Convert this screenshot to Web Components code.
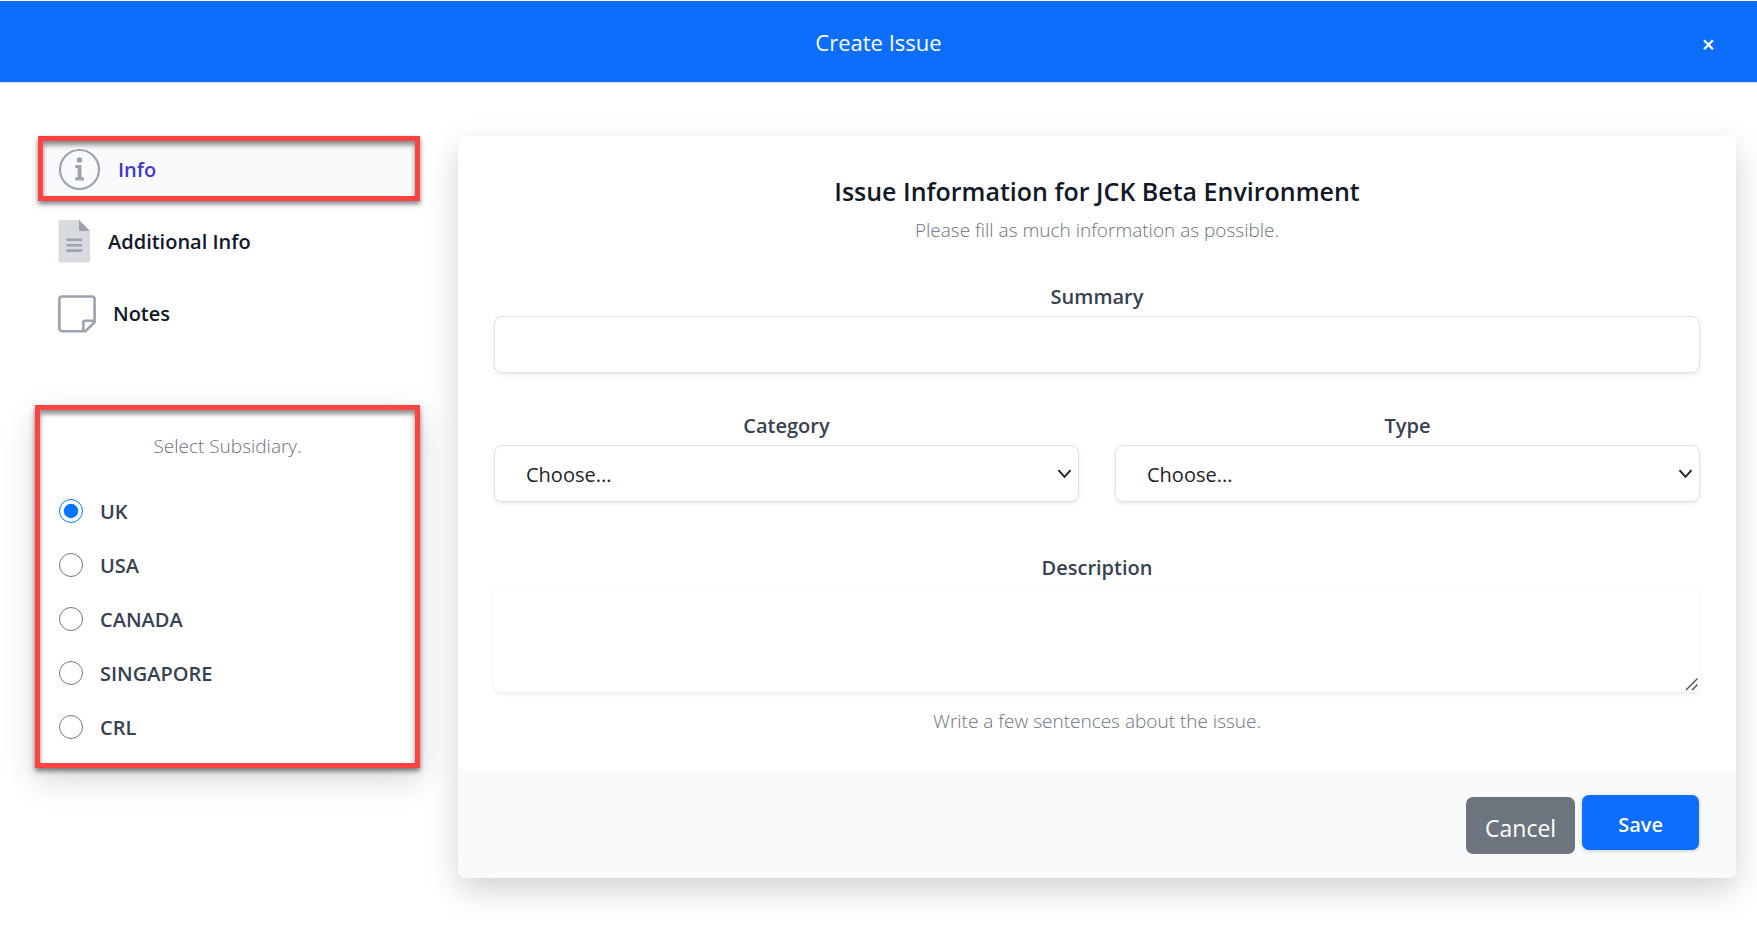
<!DOCTYPE html>
<html lang="en">
<head>
<meta charset="utf-8">
<meta name="viewport" content="width=device-width, initial-scale=1">
<title>Create Issue</title>
<style>
  body {
    margin: 0;
    background: #fff;
    font-family: "Open Sans", "Noto Sans", sans-serif;
    font-size: 20px;
    line-height: 28px;
    --blue: #0d6efd;
    --grey-50: #f9fafb;
    --grey-500: #6b7280;
    --grey-700: #374151;
    --grey-900: #111827;
    --mark: #ff4242;
  }
</style>
</head>
<body>
<issue-page>
  <dialog-header slot="header">Create Issue</dialog-header>

  <side-nav slot="aside">
    <nav-item icon="info" current>Info</nav-item>
    <nav-item icon="file">Additional Info</nav-item>
    <nav-item icon="note">Notes</nav-item>
  </side-nav>
  <subsidiary-picker slot="aside" options="UK,USA,CANADA,SINGAPORE,CRL" selected="UK">Select Subsidiary.</subsidiary-picker>

  <issue-card>
    <span slot="title">Issue Information for JCK Beta Environment</span>
    <span slot="subtitle">Please fill as much information as possible.</span>
    <text-field class="wide" label="Summary"></text-field>
    <select-field label="Category"></select-field>
    <select-field label="Type"></select-field>
    <area-field class="wide last" label="Description" hint="Write a few sentences about the issue."></area-field>
    <action-button slot="actions" kind="cancel">Cancel</action-button>
    <action-button slot="actions" kind="save">Save</action-button>
  </issue-card>
</issue-page>

<script>
  const define = (name, render) => customElements.define(name, class extends HTMLElement {
    connectedCallback() {
      if (this.shadowRoot) return;
      this.attachShadow({ mode: 'open' }).innerHTML = render(this);
    }
  });

  const fieldStyles = `
    :host { display: block; }
    label { display: block; text-align: center; font-weight: 600; line-height: 28px; color: var(--grey-700); margin-bottom: 5px; }
    input, select, textarea {
      display: block; box-sizing: border-box; width: 100%; margin: 0; height: 57px;
      font: inherit; color: #212529; background: #fff;
      border: 1px solid #dee2e6; border-radius: 8px;
      box-shadow: 0 2px 4px rgba(0, 0, 0, .08);
    }
    .control { position: relative; }
    .control svg { position: absolute; pointer-events: none; fill: none; }
  `;

  const icons = {
    info: `<svg width="43" height="43" viewBox="0 0 43 43" aria-hidden="true">
      <circle cx="21.5" cy="21.5" r="19.5" fill="none" stroke="#9ca3af" stroke-width="2.2"/>
      <circle cx="21.5" cy="12" r="2.8" fill="#9ca3af"/>
      <path d="M17.3 17h6.200v12.200h2.400v3.200h-8.600v-3.200h2.400v-9h-2.400z" fill="#9ca3af"/></svg>`,
    file: `<svg width="33" height="43" viewBox="0 0 33 43" aria-hidden="true">
      <path d="M2 0h19l11 11v30a1.5 1.5 0 0 1-1.500 1.500H2A1.500 1.500 0 0 1 .5 41V1.500A1.500 1.500 0 0 1 2 0z" fill="#d7dade"/>
      <path d="M21 0l11 11H22.500A1.500 1.500 0 0 1 21 9.500z" fill="#9ca3af"/>
      <path d="M9.500 19.800h13.600M9.500 25.200h13.600M9.500 30.600h13.600" stroke="#9ca3af" stroke-width="2.600" stroke-linecap="round"/></svg>`,
    note: `<svg width="38" height="38" viewBox="0 0 38 38" fill="none" stroke="#9ca3af" stroke-width="2.600" aria-hidden="true">
      <path d="M4 1.500h30a2.600 2.600 0 0 1 2.600 2.600v23L27.500 36.200H4a2.600 2.600 0 0 1-2.600-2.600V4.100A2.600 2.600 0 0 1 4 1.500z"/>
      <path d="M36.500 25.700H26.200a.8.800 0 0 0-.8.800v9.700" /></svg>`
  };

  define('issue-page', () => `
    <style>
      :host { display: block; }
      main { display: grid; grid-template-columns: repeat(12, minmax(0, 1fr)); column-gap: 33px; padding: 53px 21px 50px; }
      aside { grid-column: span 3; padding: 0 5px 0 14px; }
      section { grid-column: span 9; }
    </style>
    <slot name="header"></slot>
    <main>
      <aside><slot name="aside"></slot></aside>
      <section><slot></slot></section>
    </main>`);

  define('dialog-header', () => `
    <style>
      :host { display: block; }
      header { display: grid; grid-template-columns: 1fr auto 1fr; align-items: center; height: 81px; margin-top: 1px;
        background: var(--blue); border-bottom: 1px solid #dee2e6; color: #fff; }
      h1 { grid-column: 2; margin: 0; font-size: 22px; font-weight: 400; line-height: 32px; }
      button { justify-self: end; margin: 4px 38px 0 0; padding: 0 4px; border: 0; background: none; color: inherit; font: inherit; font-size: 23px; font-weight: 600; line-height: 28px; }
    </style>
    <header>
      <h1><slot></slot></h1>
      <button type="button" aria-label="Close">×</button>
    </header>`);

  define('side-nav', () => `
    <style>
      :host { display: block; margin-bottom: 60px; }
      nav { display: grid; gap: 7px; padding-left: 3px; }
    </style>
    <nav><slot></slot></nav>`);

  define('nav-item', el => `
    <style>
      :host { display: block; }
      a { display: flex; align-items: center; gap: 17px; box-sizing: border-box; height: 65px; padding: 2px 15px 0;
        border: 5px solid transparent; color: var(--grey-900); font-weight: 600; text-decoration: none; }
      svg { display: block; flex: none; }
      span { padding-top: 1px; }
      :host([current]) a { background: var(--grey-50); border-color: var(--mark); color: #4338ca;
        box-shadow: 0 3px 5px rgba(0, 0, 0, .5), inset 0 4px 5px rgba(0, 0, 0, .45); }
    </style>
    <a href="#${el.getAttribute('icon')}"${el.hasAttribute('current') ? ' aria-current="page"' : ''}>
      ${icons[el.getAttribute('icon')]}<span><slot></slot></span>
    </a>`);

  define('subsidiary-picker', el => `
    <style>
      :host { display: block; }
      fieldset { box-sizing: border-box; margin: 0; padding: 22px 19px 9px; border: 5px solid var(--mark); background: #fff;
        box-shadow: 0 3px 5px rgba(0, 0, 0, .5), inset 0 4px 5px rgba(0, 0, 0, .45), 0 12px 32px rgba(0, 0, 0, .16); }
      p { margin: 0 0 24px; text-align: center; font-size: 19px; font-weight: 300; line-height: 28px; color: var(--grey-500); }
      label { display: flex; align-items: center; height: 54px; gap: 17px; font-weight: 600; color: var(--grey-700); }
      input { width: 24px; height: 24px; margin: 0; }
      span { padding-top: 2px; }
    </style>
    <fieldset aria-labelledby="caption">
      <p id="caption"><slot></slot></p>
      ${el.getAttribute('options').split(',').map(name => `
        <label><input type="radio" name="subsidiary" value="${name}"${name === el.getAttribute('selected') ? ' checked' : ''}><span>${name}</span></label>`).join('')}
    </fieldset>`);

  define('issue-card', () => `
    <style>
      :host { display: block; border-radius: 8px; box-shadow: 0 12px 32px rgba(0, 0, 0, .18); }
      form { border-radius: 8px; background: #fff; overflow: hidden; }
      .body { padding: 37px 36px 35px; text-align: center; }
      h2 { margin: 0; font-size: 25px; font-weight: 600; line-height: 36px; color: var(--grey-900); }
      p { margin: 7px 0 39px; font-size: 19px; font-weight: 300; line-height: 28px; color: var(--grey-500); }
      .fields { display: grid; grid-template-columns: 1fr 1fr; gap: 39px 36px; }
      ::slotted(.wide) { grid-column: span 2; }
      ::slotted(.last) { margin-top: 13px; }
      footer { display: flex; justify-content: flex-end; gap: 7px; height: 108px; box-sizing: border-box; padding: 25px 37px; background: #f8fafc; }
    </style>
    <form>
      <div class="body">
        <h2><slot name="title"></slot></h2>
        <p><slot name="subtitle"></slot></p>
        <div class="fields"><slot></slot></div>
      </div>
      <footer><slot name="actions"></slot></footer>
    </form>`);

  define('text-field', el => `
    <style>${fieldStyles} input { padding: 0 12px; }</style>
    <label for="field">${el.getAttribute('label')}</label>
    <input id="field" type="text">`);

  define('select-field', el => `
    <style>
      ${fieldStyles}
      select { appearance: none; padding: 2px 32px 0 31px; }
      svg { top: 24px; right: 7px; stroke: #212529; stroke-width: 2; }
    </style>
    <label for="field">${el.getAttribute('label')}</label>
    <div class="control">
      <select id="field"><option>Choose...</option></select>
      <svg width="15" height="10" viewBox="0 0 15 10" aria-hidden="true"><path d="M1.500 1.200l6 6.600 6-6.600"/></svg>
    </div>`);

  define('area-field', el => `
    <style>
      ${fieldStyles}
      textarea { height: 105px; padding: 12px; border-color: transparent; resize: vertical; }
      textarea::-webkit-resizer { background: transparent; }
      svg { right: 1px; bottom: 1px; stroke: #4b4b4b; stroke-width: 1.400; }
      p { margin: 15px 0 0; font-size: 19px; font-weight: 300; line-height: 28px; color: var(--grey-500); }
    </style>
    <label for="field">${el.getAttribute('label')}</label>
    <div class="control">
      <textarea id="field"></textarea>
      <svg width="14" height="14" viewBox="0 0 14 14" aria-hidden="true"><path d="M1 13L12.500 1.500M7 13l5.500-5.500"/></svg>
    </div>
    <p>${el.getAttribute('hint')}</p>`);

  define('action-button', el => `
    <style>
      :host { display: block; }
      button { border: 0; border-radius: 7px; color: #fff; font: inherit; }
      .cancel { height: 57px; margin-top: 2px; padding: 4px 19px 0; background: #6c757d; font-size: 23px; }
      .save { height: 55px; padding: 4px 36px 0; background: var(--blue); font-weight: 600; box-shadow: 0 1px 4px rgba(0, 0, 0, .2); }
    </style>
    <button type="button" class="${el.getAttribute('kind')}"><slot></slot></button>`);
</script>
</body>
</html>
